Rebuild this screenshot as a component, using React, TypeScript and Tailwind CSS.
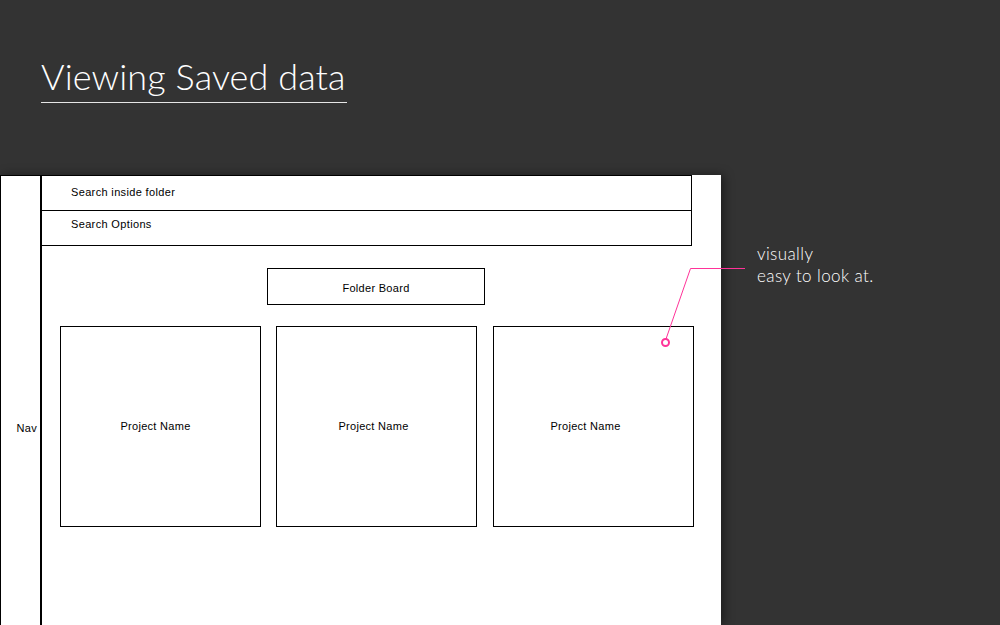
const cards = [
  { label: "Project Name", extra: "pr-[10px]" },
  { label: "Project Name", extra: "pr-[6px]" },
  { label: "Project Name", extra: "ml-[1px] pr-[16px]" },
];

export default function App() {
  return (
    <div className="relative w-[1000px] h-[625px] overflow-hidden bg-[#333333] font-['Liberation_Sans',Arial,sans-serif]">
      {/* page heading */}
      <div className="h-[175px] pl-[41px] pt-[55px]">
        <h1 className="inline-block border-b border-[#e6e6e6] pb-[5px] pr-[1px] font-['Lato',sans-serif] text-[36px] font-light leading-[42px] tracking-[0.1px] text-white">
          Viewing Saved data
        </h1>
      </div>

      <div className="flex">
        {/* wireframe panel */}
        <div className="flex h-[450px] w-[721px] bg-white shadow-[3px_0_10px_rgba(0,0,0,0.45)]">
          <div className="flex w-[42px] items-center justify-end border-l border-r-2 border-t border-black pt-[56px] pr-[3px]">
            <span className="text-[11px] tracking-[0.3px] text-black">Nav</span>
          </div>

          <div className="flex flex-1 flex-col">
            <div className="w-[650px] border border-l-0 border-black text-[11px] tracking-[0.35px] text-black">
              <div className="flex h-[35px] items-center border-b border-black pl-[29px] pb-[1px]">
                Search inside folder
              </div>
              <div className="flex h-[34px] items-center pl-[29px] pb-[7px]">
                Search Options
              </div>
            </div>

            <div className="mt-[22px] flex w-[650px] justify-center pl-[18px]">
              <div className="flex h-[37px] w-[218px] items-center justify-center border border-black pt-[3px] text-[11px] tracking-[0.3px] text-black">
                Folder Board
              </div>
            </div>

            <div className="mt-[21px] flex gap-[15px] pl-[18px]">
              {cards.map((c, i) => (
                <div
                  key={i}
                  className={`flex h-[201px] w-[201px] items-center justify-center border border-black text-[11px] tracking-[0.3px] text-black ${c.extra}`}
                >
                  {c.label}
                </div>
              ))}
            </div>
          </div>
        </div>

        {/* annotation */}
        <div className="pl-[36px] pt-[68px] font-['Lato',sans-serif] text-[17px] font-light leading-[22px] tracking-[0.4px] text-white">
          <p>visually</p>
          <p>easy to look at.</p>
        </div>
      </div>

      {/* callout line */}
      <svg className="absolute left-0 top-0 pointer-events-none" width="1000" height="625">
        <polyline points="745,268.5 690.5,268.5 666,339" fill="none" stroke="#ff3399" strokeWidth="1" />
        <circle cx="665.5" cy="342.5" r="3.5" fill="none" stroke="#ff3399" strokeWidth="2" />
      </svg>
    </div>
  );
}
